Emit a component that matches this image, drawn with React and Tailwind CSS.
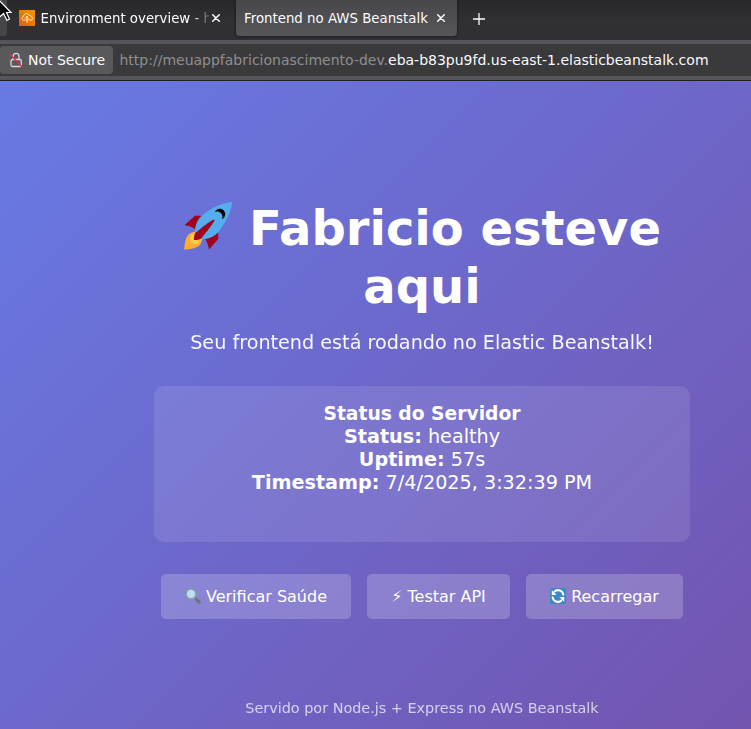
import React from 'react';

const Rocket = () => (
  <svg viewBox="0 0 36 36" className="mr-[17px] size-[49px] shrink-0 -translate-y-[2px]">
    <path fill="#A0041E" d="M1 17l8-7 16 1 1 16-7 8s.001-5.999-6-12-12-6-12-6z" />
    <path fill="#FFAC33" d="M.973 35s-.036-7.979 2.985-11S15 21.187 15 21.187 14.999 29 11.999 32c-3 3-11.026 3-11.026 3z" />
    <circle fill="#FFCC4D" cx="8.999" cy="27" r="4" />
    <path fill="#55ACEE" d="M35.999 0s-10 0-22 10c-6 5-6 14-4 16s11 2 16-4c10-12 10-22 10-22z" />
    <path d="M26.999 5c-1.623 0-3.013.971-3.641 2.360.502-.227 1.055-.360 1.641-.360 2.209 0 4 1.791 4 4 0 .586-.133 1.139-.359 1.640 1.389-.627 2.359-2.017 2.359-3.640 0-2.209-1.791-4-4-4z" />
    <path fill="#A0041E" d="M8 28s0-4 1-5 13.001-10.999 14-10-9.001 13-10.001 14S8 28 8 28z" />
  </svg>
);

const Magnifier = () => (
  <svg viewBox="0 0 36 36" className="mr-[5px] size-4 shrink-0 -translate-y-px">
    <path stroke="#8899A6" strokeWidth="4" d="M20 20l6 6" />
    <path stroke="#66757F" strokeWidth="7" strokeLinecap="round" d="M25.500 25.500l6.500 6.500" />
    <circle cx="13.500" cy="13.500" r="11.500" fill="#BBDDF5" stroke="#8899A6" strokeWidth="4" />
  </svg>
);

const Reload = () => (
  <svg viewBox="0 0 36 36" className="mr-[5px] size-4 shrink-0 -translate-y-px">
    <rect width="36" height="36" rx="4" fill="#3B88C3" />
    <g fill="none" stroke="#fff" strokeWidth="4.500">
      <path d="M6 19a12 12 0 0 0 21 8" />
      <path d="M30 17a12 12 0 0 0-21-8" />
    </g>
    <path fill="#fff" d="M4 5v11h11zM32 31V20H21z" />
  </svg>
);

const Close = () => (
  <svg viewBox="0 0 8 8" className="size-2 shrink-0" fill="none" stroke="#fbfbfe" strokeWidth="1.500" strokeLinecap="round">
    <path d="M.7.7l6.600 6.600M7.300.7L.7 7.300" />
  </svg>
);

const CloudLogo = () => (
  <svg viewBox="0 0 16 16" className="size-4 shrink-0">
    <defs>
      <linearGradient id="aws" x1="0" y1="1" x2="1" y2="0">
        <stop stopColor="#d86008" />
        <stop offset="1" stopColor="#fb9404" />
      </linearGradient>
    </defs>
    <rect width="16" height="16" fill="url(#aws)" />
    <g fill="none" stroke="#fff" strokeWidth=".9" strokeLinecap="round" strokeLinejoin="round" opacity=".85">
      <path d="M6 10H4.300C2.200 9.700 2.300 7 4.400 6.800 4.500 3.200 9.200 2.400 10.300 5.500c1.200-.4 2 .3 2 1.400 2 .5 1.700 3.100-.3 3.100H10" />
      <path d="M8 12.500V7M8 9.500L6.200 7.700M8 10.500l2-2" />
      <circle cx="8" cy="6.800" r=".5" />
    </g>
  </svg>
);

const InsecureLock = () => (
  <svg viewBox="0 0 14 16" className="h-4 w-[14px] shrink-0" fill="none">
    <path d="M4.200 7.500V4.200a2.900 2.900 0 0 1 5.800 0v3.300" stroke="#d8d8dc" strokeWidth="1.300" />
    <rect x="2" y="7.500" width="10.300" height="7" rx="1.500" stroke="#d8d8dc" strokeWidth="1.300" />
    <path d="M.7 2l12.600 13" stroke="#e22850" strokeWidth="1.200" />
  </svg>
);

function BrowserChrome() {
  return (
    <header className="relative h-[81px] text-[13.33px] text-[#fbfbfe]">
      <div className="flex h-10 items-start bg-linear-to-b from-[#28282a] to-[#302f34] to-50%">
        <div className="h-9 w-[7px] rounded-br-[4px] bg-[#46464a]" />
        <div className="flex h-9 w-[229px] items-center pl-3">
          <CloudLogo />
          <span className="mt-px ml-[5.500px] w-[168.500px] whitespace-nowrap [mask-image:linear-gradient(to_right,#000_150px,transparent_172px)]">Environment overview - h</span>
          <span className="ml-[3px]"><Close /></span>
        </div>
        <div className="flex h-9 w-[221px] items-center rounded-b-[4px] bg-linear-to-b from-[#48484c] to-[#55555a] pl-2 shadow-[0_0_3px_#111]">
          <span className="mt-px w-[193px] whitespace-nowrap">Frontend no AWS Beanstalk</span>
          <Close />
        </div>
        <svg viewBox="0 0 12 12" className="mt-[13px] ml-[16px] size-3" stroke="#fbfbfe" strokeWidth="1.300">
          <path d="M0 6h12M6 0v12" />
        </svg>
      </div>
      <div className="flex h-10 items-center border-y-4 border-[#55545a] bg-[#3a3a3c]">
        <div className="flex h-7 w-[113px] items-center rounded-[4px] bg-[#59595c] pl-[9px]">
          <InsecureLock />
          <span className="ml-[5px] text-[14px] whitespace-nowrap">Not Secure</span>
        </div>
        <span className="ml-[6.500px] text-[14px] whitespace-nowrap text-[#8f8f91]">
          http://meuappfabricionascimento-dev.<span className="text-[#fbfbfe]">eba-b83pu9fd.us-east-1.elasticbeanstalk.com</span>
        </span>
      </div>
      <div className="h-px bg-[#202024]" />
      <svg viewBox="0 0 14 22" className="absolute top-0 -left-[1px] h-[22px] w-[14px]">
        <path d="M0 0L12 12.500H7.500L10.500 19 8 20.500 4.500 13.500 0 17.500z" fill="#050505" stroke="#fff" strokeWidth="1.200" />
      </svg>
    </header>
  );
}

const Line = ({ label, children }) => (
  <p><strong>{label}</strong> {children}</p>
);

const Button = ({ width, children }) => (
  <button className={`flex h-[45px] items-center justify-center rounded-[5px] bg-white/20 text-[16px] whitespace-nowrap ${width}`}>{children}</button>
);

export default function App() {
  return (
    <div className="h-[729px] w-[751px] overflow-hidden font-['DejaVu_Sans',sans-serif]">
      <BrowserChrome />
      <main className="-ml-[150px] flex h-[756px] w-[1144px] flex-col items-center bg-[linear-gradient(135deg,#667eea_0%,#764ba2_100%)] pt-[118px] text-white">
        <h1 className="flex flex-col items-center text-[48px] leading-[58px] font-bold whitespace-nowrap">
          <span className="flex items-center"><Rocket />Fabricio esteve</span>
          <span>aqui</span>
        </h1>
        <p className="mt-[16px] text-[19.2px] leading-[23px] opacity-95">Seu frontend está rodando no Elastic Beanstalk!</p>
        <section className="mt-[32px] h-[156px] w-[536px] rounded-[10px] bg-white/10 pt-4 text-center text-[19.2px] leading-[23px]">
          <h3 className="text-[18.72px] font-bold">Status do Servidor</h3>
          <Line label="Status:">healthy</Line>
          <Line label="Uptime:">57s</Line>
          <Line label="Timestamp:">7/4/2025, 3:32:39 PM</Line>
        </section>
        <div className="mt-8 flex gap-4">
          <Button width="w-[190px]"><Magnifier />Verificar Saúde</Button>
          <Button width="w-[143px]">⚡︎ Testar API</Button>
          <Button width="w-[157px]"><Reload />Recarregar</Button>
        </div>
        <footer className="mt-[80px] text-[14.4px] leading-[18px] opacity-70">Servido por Node.js + Express no AWS Beanstalk</footer>
      </main>
    </div>
  );
}
